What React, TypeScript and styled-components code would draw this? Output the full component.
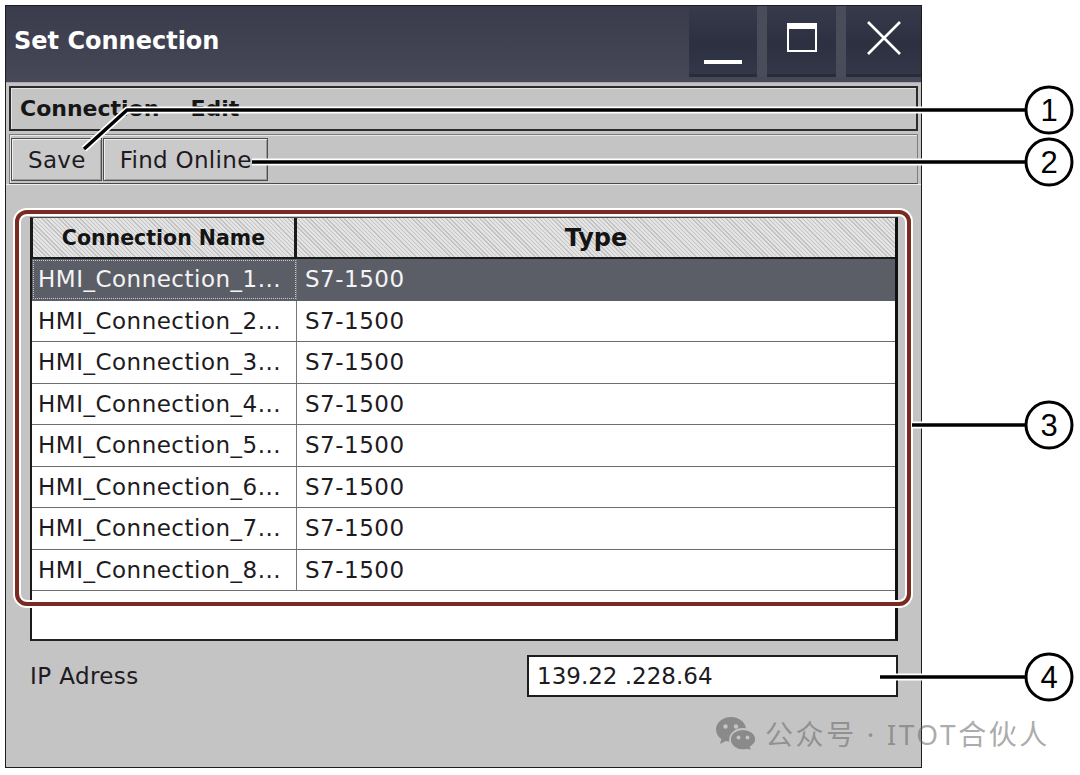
import React from "react";
import styled, { createGlobalStyle } from "styled-components";

interface Connection {
  name: string;
  type: string;
}

const connections: Connection[] = Array.from({ length: 8 }, (_, i) => ({
  name: `HMI_Connection_${i + 1}...`,
  type: "S7-1500",
}));

// callout leaders: number, circle centre y, line path
const callouts = [
  { n: 1, y: 110, d: "M1026 110 H127 L84 149" },
  { n: 2, y: 162, d: "M1026 162 H252" },
  { n: 3, y: 425, d: "M1026 425 H912" },
  { n: 4, y: 677, d: "M1026 677 H880" },
];

export default function App() {
  return (
    <Page>
      <GlobalStyle />
      <Window>
        <TitleBar>
          <Title>Set Connection</Title>
          <TitleButtons>
            <WinButton $w={68} $align="flex-end">
              <svg width="40" height="20" viewBox="0 0 40 20">
                <rect x="1" y="13" width="38" height="4" fill="#ffffff" />
              </svg>
            </WinButton>
            <WinButton $w={69} $align="center">
              <svg width="32" height="32" viewBox="0 0 32 32">
                <rect x="2" y="2" width="28" height="27" fill="none" stroke="#ffffff" strokeWidth="2" />
                <rect x="2" y="2" width="28" height="5" fill="#ffffff" />
              </svg>
            </WinButton>
            <WinButton $w={75} $align="center">
              <svg width="36" height="36" viewBox="0 0 36 36">
                <path d="M2 2 L34 34 M34 2 L2 34" stroke="#ffffff" strokeWidth="2.6" />
              </svg>
            </WinButton>
          </TitleButtons>
        </TitleBar>

        <Body>
          <MenuBar>
            <MenuItem>Connection</MenuItem>
            <MenuItem>Edit</MenuItem>
          </MenuBar>

          <ToolBar>
            <ToolButton>Save</ToolButton>
            <ToolButton>Find Online</ToolButton>
          </ToolBar>

          <Content>
            <ListWrap>
              <Highlight />
              <ListBox>
                <HeaderRow>
                  <HeaderCell $size={20.5} $first>Connection Name</HeaderCell>
                  <HeaderCell $size={24}>Type</HeaderCell>
                </HeaderRow>
                {connections.map((c, i) => (
                  <Row key={c.name} $selected={i === 0}>
                    <Cell $first $focus={i === 0}>{c.name}</Cell>
                    <Cell>{c.type}</Cell>
                  </Row>
                ))}
              </ListBox>
            </ListWrap>

            <IpRow>
              <IpLabel>IP Adress</IpLabel>
              <IpInput>139.22 .228.64</IpInput>
            </IpRow>
          </Content>
        </Body>
      </Window>

      <Watermark>
        <svg width="42" height="36" viewBox="0 0 42 36">
          <g>
            <path
              d="M16 2 C7.5 2 1 7.6 1 14.5 C1 18.4 3.1 21.8 6.4 24 L5 29 L10.6 26.1 C12.3 26.6 14.1 26.9 16 26.9 C24.5 26.9 31 21.3 31 14.5 C31 7.6 24.5 2 16 2 Z"
              fill="#8a8a8a"
            />
            <circle cx="10.5" cy="11.5" r="2.2" fill="#c4c4c4" />
            <circle cx="21" cy="11.5" r="2.2" fill="#c4c4c4" />
            <path
              d="M28 14 C20.8 14 15 18.8 15 24.6 C15 30.4 20.8 35.2 28 35.2 C29.5 35.2 30.9 35 32.2 34.6 L37 36 L35.8 31.9 C38.9 30 41 27.5 41 24.6 C41 18.8 35.2 14 28 14 Z"
              fill="#8a8a8a"
              stroke="#c4c4c4"
              strokeWidth="1.8"
            />
            <circle cx="23.5" cy="22.5" r="1.9" fill="#c4c4c4" />
            <circle cx="32.5" cy="22.5" r="1.9" fill="#c4c4c4" />
          </g>
        </svg>
        <WatermarkText>公众号 · ITOT合伙人</WatermarkText>
      </Watermark>

      <Overlay width="1080" height="775" viewBox="0 0 1080 775">
        {callouts.map((c) => (
          <g key={c.n}>
            <path d={c.d} fill="none" stroke="#ffffff" strokeWidth="7" strokeLinejoin="round" />
            <path d={c.d} fill="none" stroke="#000000" strokeWidth="3.5" strokeLinejoin="round" />
            <circle cx="1049" cy={c.y} r="23" fill="#ffffff" stroke="#000000" strokeWidth="3" />
            <CalloutNumber x="1049" y={c.y + 11} textAnchor="middle">
              {c.n}
            </CalloutNumber>
          </g>
        ))}
      </Overlay>
    </Page>
  );
}

//styled-components
const GlobalStyle = createGlobalStyle`
  html, body {
    margin: 0;
    padding: 0;
    background: #ffffff;
  }
  body {
    font-family: "DejaVu Sans", Verdana, sans-serif;
  }
`;

const Page = styled.div`
  position: relative;
  width: 1080px;
  height: 775px;
  box-sizing: border-box;
  padding: 5px 0 0 5px;
  overflow: hidden;
`;

const Window = styled.div`
  width: 917px;
  height: 763px;
  box-sizing: border-box;
  border: 1px solid #1d1d1d;
  background: #c4c4c4;
  display: flex;
  flex-direction: column;
`;

const TitleBar = styled.div`
  height: 77px;
  box-sizing: border-box;
  display: flex;
  justify-content: space-between;
  align-items: flex-start;
  background: linear-gradient(180deg, #3a3c4d 0%, #414352 60%, #474958 100%);
  border-bottom: 1px solid #a9aab0;
`;

const Title = styled.div`
  height: 70px;
  display: flex;
  align-items: center;
  padding-left: 8px;
  color: #ffffff;
  font-size: 24px;
  font-weight: bold;
`;

const TitleButtons = styled.div`
  display: flex;
  gap: 10px;
  background: #4a4c5a;
  height: 71px;
`;

const WinButton = styled.div<{ $w: number; $align: string }>`
  width: ${({ $w }) => $w}px;
  height: 71px;
  box-sizing: border-box;
  display: flex;
  justify-content: center;
  align-items: ${({ $align }) => $align};
  padding-bottom: ${({ $align }) => ($align === "flex-end" ? "10px" : "8px")};
  background: linear-gradient(180deg, #373a4b 0%, #2d3041 55%, #353848 100%);
  box-shadow: inset 0 -3px 0 #2a2c3a;
`;

const Body = styled.div`
  flex: 1;
  display: flex;
  flex-direction: column;
`;

const MenuBar = styled.div`
  margin: 3px 3px 0 3px;
  height: 45px;
  box-sizing: border-box;
  border: 2px solid #2b2b2b;
  box-shadow: inset 1px 1px 0 #e4e4e4;
  display: flex;
  align-items: center;
  gap: 31px;
  padding-left: 9px;
`;

const MenuItem = styled.span`
  font-size: 22px;
  font-weight: bold;
  color: #161616;
`;

const ToolBar = styled.div`
  margin: 3px 3px 0 3px;
  height: 50px;
  box-sizing: border-box;
  border: 1px solid #7d7d7d;
  border-bottom-color: #4a4a4a;
  box-shadow: inset 1px 1px 0 #e8e8e8;
  display: flex;
  align-items: flex-start;
  gap: 1px;
  padding: 3px 0 0 1px;
`;

const ToolButton = styled.div`
  height: 43px;
  box-sizing: border-box;
  padding: 0 15px 0 16px;
  display: flex;
  align-items: center;
  font-size: 23px;
  letter-spacing: 0.3px;
  color: #1e1a22;
  background: #cacaca;
  border: 1px solid #4e4e4e;
  box-shadow: inset 1px 1px 0 #efefef, inset -1px -1px 0 #9a9a9a;
`;

const Content = styled.div`
  flex: 1;
  border-top: 1px solid #eeeeee;
  padding: 32px 0 0 24px;
`;

const ListWrap = styled.div`
  position: relative;
  width: 868px;
`;

const Highlight = styled.div`
  position: absolute;
  left: -15px;
  top: -7px;
  width: 896px;
  height: 396px;
  box-sizing: border-box;
  border: 4px solid #7a2a21;
  border-radius: 12px;
  box-shadow: 0 0 0 2px #ffffff, inset 0 0 0 2px #ffffff;
  pointer-events: none;
  z-index: 1;
`;

const ListBox = styled.div`
  height: 424px;
  box-sizing: border-box;
  background: #ffffff;
  border-top: 1px solid #4a4a4a;
  border-left: 2px solid #1a1a1a;
  border-right: 3px solid #111111;
  border-bottom: 2px solid #222222;
`;

const HeaderRow = styled.div`
  display: grid;
  grid-template-columns: 265px 1fr;
  height: 41px;
  box-sizing: border-box;
  border-bottom: 2px solid #1a1a1a;
`;

const HeaderCell = styled.div<{ $size: number; $first?: boolean }>`
  display: flex;
  align-items: center;
  justify-content: center;
  font-size: ${({ $size }) => $size}px;
  font-weight: bold;
  color: #141414;
  background-color: #dadada;
  background-image: repeating-linear-gradient(
    45deg,
    rgba(150, 150, 150, 0.35) 0 1px,
    rgba(255, 255, 255, 0.25) 1px 3px
  );
  border-left: ${({ $first }) => ($first ? "1px solid #1a1a1a" : "none")};
  border-right: ${({ $first }) => ($first ? "3px solid #1a1a1a" : "none")};
  box-sizing: border-box;
`;

const Row = styled.div<{ $selected: boolean }>`
  display: grid;
  grid-template-columns: 265px 1fr;
  height: 41.5px;
  box-sizing: border-box;
  border-bottom: 1px solid ${({ $selected }) => ($selected ? "#5c5e67" : "#6e6e6e")};
  background: ${({ $selected }) => ($selected ? "#5c5e67" : "#ffffff")};
  color: ${({ $selected }) => ($selected ? "#f4f4f4" : "#1e1a22")};
`;

const Cell = styled.div<{ $first?: boolean; $focus?: boolean }>`
  display: flex;
  align-items: center;
  box-sizing: border-box;
  padding-left: ${({ $first }) => ($first ? "6px" : "8px")};
  font-size: 23px;
  letter-spacing: 0.5px;
  white-space: nowrap;
  overflow: hidden;
  border-right: ${({ $first }) => ($first ? "1px solid #777777" : "none")};
  outline: ${({ $focus }) => ($focus ? "1px dotted #c9c9c9" : "none")};
  outline-offset: -2px;
`;

const IpRow = styled.div`
  width: 868px;
  height: 42px;
  margin-top: 14px;
  display: flex;
  justify-content: space-between;
  align-items: center;
`;

const IpLabel = styled.span`
  font-size: 23px;
  letter-spacing: 0.4px;
  color: #201a22;
`;

const IpInput = styled.div`
  width: 371px;
  height: 42px;
  box-sizing: border-box;
  border: 2px solid #1e1e1e;
  background: #ffffff;
  padding-left: 8px;
  display: flex;
  align-items: center;
  font-size: 23px;
  color: #201a22;
`;

const Watermark = styled.div`
  position: absolute;
  left: 715px;
  top: 713px;
  display: flex;
  align-items: center;
  gap: 8px;
`;

const WatermarkText = styled.span`
  font-family: "Noto Sans", "Noto Sans CJK SC", sans-serif;
  font-size: 28px;
  letter-spacing: 2.6px;
  color: rgba(100, 100, 100, 0.55);
`;

const Overlay = styled.svg`
  position: absolute;
  left: 0;
  top: 0;
  pointer-events: none;
  z-index: 2;
`;

const CalloutNumber = styled.text`
  font-family: "Liberation Sans", Arial, sans-serif;
  font-size: 31px;
  fill: #000000;
`;
